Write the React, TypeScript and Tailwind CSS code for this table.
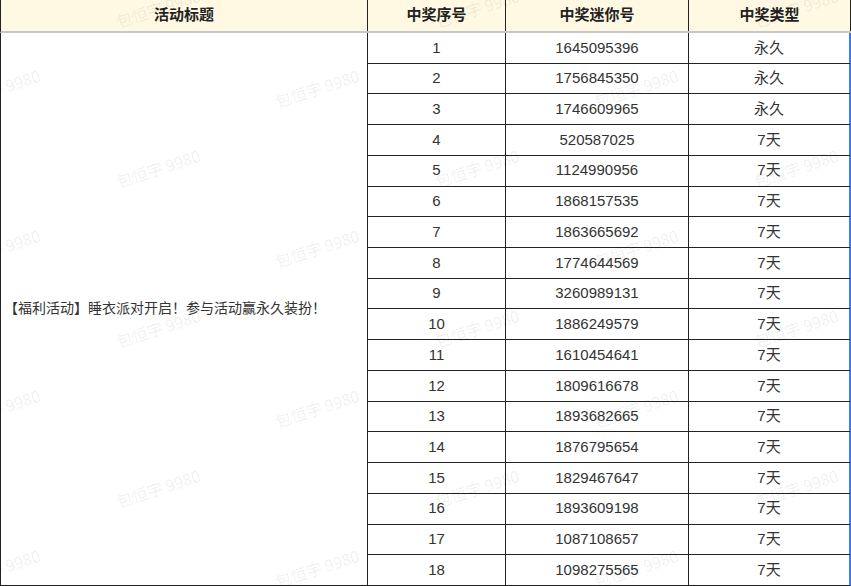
const rows = [
  { no: 1, mini: '1645095396', type: '永久' },
  { no: 2, mini: '1756845350', type: '永久' },
  { no: 3, mini: '1746609965', type: '永久' },
  { no: 4, mini: '520587025', type: '7天' },
  { no: 5, mini: '1124990956', type: '7天' },
  { no: 6, mini: '1868157535', type: '7天' },
  { no: 7, mini: '1863665692', type: '7天' },
  { no: 8, mini: '1774644569', type: '7天' },
  { no: 9, mini: '3260989131', type: '7天' },
  { no: 10, mini: '1886249579', type: '7天' },
  { no: 11, mini: '1610454641', type: '7天' },
  { no: 12, mini: '1809616678', type: '7天' },
  { no: 13, mini: '1893682665', type: '7天' },
  { no: 14, mini: '1876795654', type: '7天' },
  { no: 15, mini: '1829467647', type: '7天' },
  { no: 16, mini: '1893609198', type: '7天' },
  { no: 17, mini: '1087108657', type: '7天' },
  { no: 18, mini: '1098275565', type: '7天' },
]

// watermark lattice: columns every ~160px, alternate columns shifted half a step
const marks: { x: number; y: number }[] = []
for (let i = 0; i < 6; i++) {
  const base = i % 2 === 0 ? 88 : 8
  for (let k = -1; k < 5; k++) {
    marks.push({ x: -2 + i * 159.5, y: base + k * 160 })
  }
}

const font = { fontFamily: '"Liberation Sans", "Noto Sans CJK SC", sans-serif' }

export default function App() {
  return (
    <div className="relative w-[851px] h-[586px] overflow-hidden bg-white text-[#333]" style={font}>
      <div className="grid grid-cols-[367px_138px_183px_162px] h-[33px] bg-[#fff8e2] border-l border-[#222] border-b-2 border-b-[#c5c7cb] text-[15px] font-bold text-[#222]">
        <div className="flex items-center justify-center border-r border-[#222]">活动标题</div>
        <div className="flex items-center justify-center border-r border-[#222]">中奖序号</div>
        <div className="flex items-center justify-center border-r border-[#222]">中奖迷你号</div>
        <div className="flex items-center justify-center border-r border-[#222]">中奖类型</div>
      </div>

      <div className="grid grid-cols-[367px_138px_183px_162px] auto-rows-[30.72px] border-l border-[#222] text-[15px]">
        <div className="row-span-18 flex items-center pl-[3px] border-r border-b border-[#222] text-[14px]">
          【福利活动】睡衣派对开启！参与活动赢永久装扮！
        </div>
        {rows.map((r) => (
          <div key={r.no} className="contents">
            <div className="flex items-center justify-center border-r border-b border-[#222]">{r.no}</div>
            <div className="flex items-center justify-center border-r border-b border-[#222]">{r.mini}</div>
            <div className="flex items-center justify-center border-b border-[#222] border-r-2 border-r-[#3b7cf3]">{r.type}</div>
          </div>
        ))}
      </div>

      <div className="pointer-events-none absolute inset-0">
        {marks.map((m, i) => (
          <div
            key={i}
            className="absolute w-[100px] -ml-[50px] -mt-[11px] text-center text-[16px] leading-[22px] whitespace-nowrap text-black/[0.07] -rotate-[18deg]"
            style={{ left: m.x, top: m.y, fontFamily: '"Noto Sans CJK SC", sans-serif' }}
          >
            包恒宇 9980
          </div>
        ))}
      </div>
    </div>
  )
}
